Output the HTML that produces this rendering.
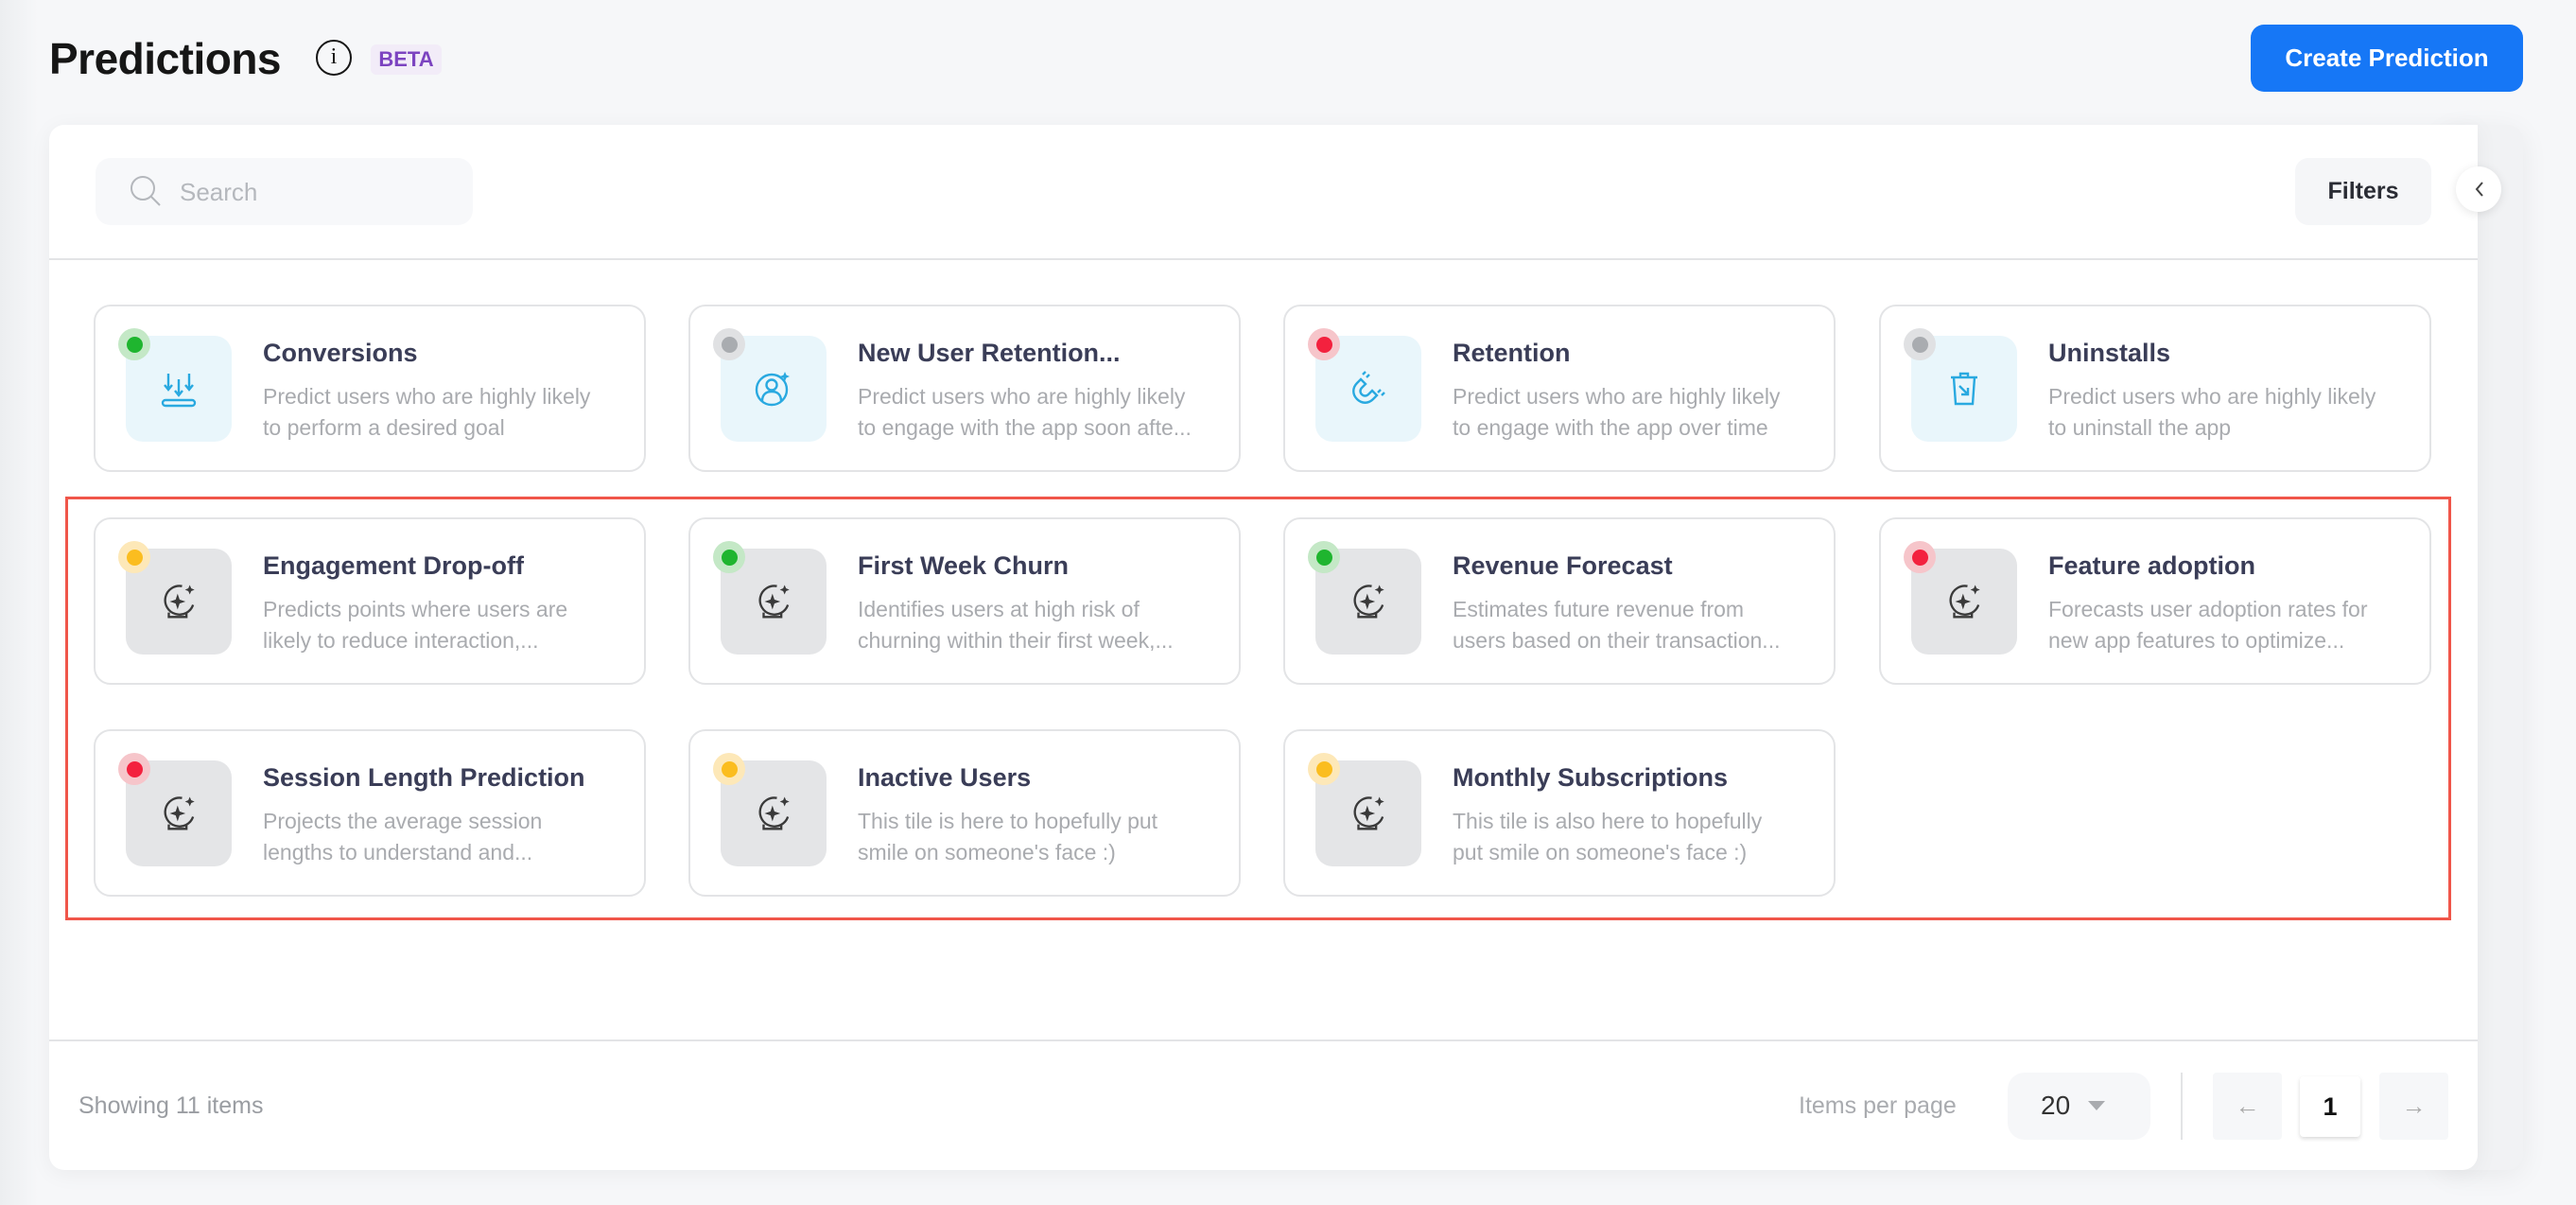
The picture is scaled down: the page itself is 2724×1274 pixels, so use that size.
<!DOCTYPE html>
<html><head><meta charset="utf-8"><style>
*{box-sizing:border-box;margin:0;padding:0}
body{width:2724px;height:1274px;background:#f6f7f9;font-family:"Liberation Sans",sans-serif;position:relative;overflow:hidden}
.a{position:absolute}
.card{position:absolute;width:584px;height:177px;border:2px solid #e3e4e6;border-radius:18px;background:#fff}
.ib{position:absolute;left:32px;top:31px;width:112px;height:112px;border-radius:18px;background:#e4e5e7;display:flex;align-items:center;justify-content:center}
.ib.b{background:#e9f6fb}
.dot{position:absolute;left:24px;top:23px;width:34px;height:34px;border-radius:50%;display:flex;align-items:center;justify-content:center}
.dot i{width:17px;height:17px;border-radius:50%;display:block}
.g{background:#c4e8c6}.g i{background:#1fb52f}
.r{background:#f6c5ca}.r i{background:#f3213e}
.y{background:#fde8b8}.y i{background:#fbbd1f}
.n{background:#e0e1e3}.n i{background:#a9acb0}
.t{position:absolute;left:177px;top:34px;font-size:27px;font-weight:bold;color:#3a3d57;white-space:nowrap}
.d{position:absolute;left:177px;top:79px;font-size:23px;line-height:33px;color:#a9abaf;width:362px}
</style></head><body>
<div class="a" style="left:0;top:0;width:40px;height:1274px;background:linear-gradient(90deg,#eceef0,#f6f7f9)"></div>
<div class="a" style="left:52px;top:35px;font-size:46px;font-weight:bold;color:#161616;letter-spacing:-0.5px">Predictions</div>
<div class="a" style="left:334px;top:42px;width:38px;height:38px;border:2.5px solid #161616;border-radius:50%;text-align:center;font-size:24px;line-height:33px;color:#161616;font-family:'Liberation Serif',serif">i</div>
<div class="a" style="left:392px;top:47px;width:75px;height:32px;background:#f2ecf8;border-radius:6px;color:#7c44c0;font-weight:bold;font-size:22px;line-height:32px;text-align:center">BETA</div>
<div class="a" style="left:2380px;top:26px;width:288px;height:71px;background:#1677f6;border-radius:14px;color:#fff;font-weight:bold;font-size:26px;line-height:71px;text-align:center">Create Prediction</div>

<div class="a" style="left:2580px;top:132px;width:88px;height:1105px;background:#f1f2f4;border-radius:16px;box-shadow:0 6px 30px rgba(0,0,0,.06)"></div>
<div class="a" style="left:52px;top:132px;width:2568px;height:1105px;background:#fff;border-radius:16px 0 16px 16px;box-shadow:0 4px 24px rgba(0,0,0,.05)"></div>

<div class="a" style="left:101px;top:167px;width:399px;height:71px;background:#f7f8fa;border-radius:16px"></div>
<svg class="a" style="left:136px;top:184px" width="36" height="36" viewBox="0 0 36 36"><circle cx="15" cy="15" r="12" fill="none" stroke="#b4b7bc" stroke-width="2"/><path d="M24 24l9 9" stroke="#b4b7bc" stroke-width="2"/></svg>
<div class="a" style="left:190px;top:188px;font-size:26px;color:#b5b8bd">Search</div>
<div class="a" style="left:2427px;top:167px;width:144px;height:71px;background:#f5f6f8;border-radius:14px;font-weight:bold;font-size:25px;color:#2a2c34;line-height:71px;text-align:center">Filters</div>
<div class="a" style="left:2597px;top:176px;width:48px;height:48px;border-radius:50%;background:#fff;box-shadow:0 2px 10px rgba(0,0,0,.1)"></div>
<svg class="a" style="left:2612px;top:190px" width="20" height="20" viewBox="0 0 20 20"><path d="M13 3l-6 7 6 7" fill="none" stroke="#444" stroke-width="2"/></svg>
<div class="a" style="left:52px;top:273px;width:2568px;height:2px;background:#e3e4e6"></div>

<div class="a" style="left:69px;top:525px;width:2523px;height:448px;border:3px solid #f0564a"></div>

<div class="card" style="left:99px;top:322px"><div class="ib b"><svg width="44" height="44" viewBox="0 0 44 44" fill="none" stroke="#29a9e0" stroke-width="2.4"><path d="M11 6v16M7 18l4 5 4-5M22 12v16M18 24l4 5 4-5M33 6v16M29 18l4 5 4-5"/><rect x="5" y="34" width="34" height="6" rx="3"/></svg></div><div class="dot g"><i></i></div><div class="t">Conversions</div><div class="d">Predict users who are highly likely to perform a desired goal</div></div>
<div class="card" style="left:728px;top:322px"><div class="ib b"><svg width="44" height="44" viewBox="0 0 44 44" fill="none" stroke="#29a9e0" stroke-width="2.4"><circle cx="20" cy="23" r="16"/><circle cx="20" cy="18" r="5.5"/><path d="M10 35c0-7 4-10 10-10s10 3 10 10"/><path d="M34 4l1.5 3.5L39 9l-3.5 1.5L34 14l-1.5-3.5L29 9l3.5-1.5z" fill="#29a9e0" stroke="none"/></svg></div><div class="dot n"><i></i></div><div class="t">New User Retention...</div><div class="d">Predict users who are highly likely to engage with the app soon afte...</div></div>
<div class="card" style="left:1357px;top:322px"><div class="ib b"><svg width="44" height="44" viewBox="0 0 44 44" fill="none" stroke="#29a9e0" stroke-width="2.4"><path d="M14 12l-4 4c-5 5-5 12 0 17s12 5 17 0l4-4-5-5-4 4c-2 2-5 2-7 0s-2-5 0-7l4-4z"/><path d="M16 7l3-3M20 10l3-3M32 26l3-3M36 29l3-3"/></svg></div><div class="dot r"><i></i></div><div class="t">Retention</div><div class="d">Predict users who are highly likely to engage with the app over time</div></div>
<div class="card" style="left:1987px;top:322px"><div class="ib b"><svg width="44" height="44" viewBox="0 0 44 44" fill="none" stroke="#29a9e0" stroke-width="2.4"><path d="M8 10h28M18 10V6h8v4M11 10l2 28h18l2-28"/><path d="M17 19l9 9M26 21v7h-7"/></svg></div><div class="dot n"><i></i></div><div class="t">Uninstalls</div><div class="d">Predict users who are highly likely to uninstall the app</div></div>

<div class="card" style="left:99px;top:547px"><div class="ib"><svg width="42" height="42" viewBox="0 0 36 36" fill="none" stroke="#3a3a3a" stroke-width="2"><path d="M21 4a13 13 0 1 0 10 17"/><path d="M9 28v4h16v-4"/><path d="M17 14l1 3 3 1-3 1-1 3-1-3-3-1 3-1z" fill="#3a3a3a"/><path d="M28 3l1.3 3 3 1.3-3 1.3-1.3 3-1.3-3-3-1.3 3-1.3z" fill="#3a3a3a" stroke="none"/></svg></div><div class="dot y"><i></i></div><div class="t">Engagement Drop-off</div><div class="d">Predicts points where users are likely to reduce interaction,...</div></div>
<div class="card" style="left:728px;top:547px"><div class="ib"><svg width="42" height="42" viewBox="0 0 36 36" fill="none" stroke="#3a3a3a" stroke-width="2"><path d="M21 4a13 13 0 1 0 10 17"/><path d="M9 28v4h16v-4"/><path d="M17 14l1 3 3 1-3 1-1 3-1-3-3-1 3-1z" fill="#3a3a3a"/><path d="M28 3l1.3 3 3 1.3-3 1.3-1.3 3-1.3-3-3-1.3 3-1.3z" fill="#3a3a3a" stroke="none"/></svg></div><div class="dot g"><i></i></div><div class="t">First Week Churn</div><div class="d">Identifies users at high risk of churning within their first week,...</div></div>
<div class="card" style="left:1357px;top:547px"><div class="ib"><svg width="42" height="42" viewBox="0 0 36 36" fill="none" stroke="#3a3a3a" stroke-width="2"><path d="M21 4a13 13 0 1 0 10 17"/><path d="M9 28v4h16v-4"/><path d="M17 14l1 3 3 1-3 1-1 3-1-3-3-1 3-1z" fill="#3a3a3a"/><path d="M28 3l1.3 3 3 1.3-3 1.3-1.3 3-1.3-3-3-1.3 3-1.3z" fill="#3a3a3a" stroke="none"/></svg></div><div class="dot g"><i></i></div><div class="t">Revenue Forecast</div><div class="d">Estimates future revenue from users based on their transaction...</div></div>
<div class="card" style="left:1987px;top:547px"><div class="ib"><svg width="42" height="42" viewBox="0 0 36 36" fill="none" stroke="#3a3a3a" stroke-width="2"><path d="M21 4a13 13 0 1 0 10 17"/><path d="M9 28v4h16v-4"/><path d="M17 14l1 3 3 1-3 1-1 3-1-3-3-1 3-1z" fill="#3a3a3a"/><path d="M28 3l1.3 3 3 1.3-3 1.3-1.3 3-1.3-3-3-1.3 3-1.3z" fill="#3a3a3a" stroke="none"/></svg></div><div class="dot r"><i></i></div><div class="t">Feature adoption</div><div class="d">Forecasts user adoption rates for new app features to optimize...</div></div>

<div class="card" style="left:99px;top:771px"><div class="ib"><svg width="42" height="42" viewBox="0 0 36 36" fill="none" stroke="#3a3a3a" stroke-width="2"><path d="M21 4a13 13 0 1 0 10 17"/><path d="M9 28v4h16v-4"/><path d="M17 14l1 3 3 1-3 1-1 3-1-3-3-1 3-1z" fill="#3a3a3a"/><path d="M28 3l1.3 3 3 1.3-3 1.3-1.3 3-1.3-3-3-1.3 3-1.3z" fill="#3a3a3a" stroke="none"/></svg></div><div class="dot r"><i></i></div><div class="t">Session Length Prediction</div><div class="d">Projects the average session lengths to understand and...</div></div>
<div class="card" style="left:728px;top:771px"><div class="ib"><svg width="42" height="42" viewBox="0 0 36 36" fill="none" stroke="#3a3a3a" stroke-width="2"><path d="M21 4a13 13 0 1 0 10 17"/><path d="M9 28v4h16v-4"/><path d="M17 14l1 3 3 1-3 1-1 3-1-3-3-1 3-1z" fill="#3a3a3a"/><path d="M28 3l1.3 3 3 1.3-3 1.3-1.3 3-1.3-3-3-1.3 3-1.3z" fill="#3a3a3a" stroke="none"/></svg></div><div class="dot y"><i></i></div><div class="t">Inactive Users</div><div class="d">This tile is here to hopefully put smile on someone's face :)</div></div>
<div class="card" style="left:1357px;top:771px"><div class="ib"><svg width="42" height="42" viewBox="0 0 36 36" fill="none" stroke="#3a3a3a" stroke-width="2"><path d="M21 4a13 13 0 1 0 10 17"/><path d="M9 28v4h16v-4"/><path d="M17 14l1 3 3 1-3 1-1 3-1-3-3-1 3-1z" fill="#3a3a3a"/><path d="M28 3l1.3 3 3 1.3-3 1.3-1.3 3-1.3-3-3-1.3 3-1.3z" fill="#3a3a3a" stroke="none"/></svg></div><div class="dot y"><i></i></div><div class="t">Monthly Subscriptions</div><div class="d">This tile is also here to hopefully put smile on someone's face :)</div></div>

<div class="a" style="left:52px;top:1099px;width:2568px;height:2px;background:#e3e4e6"></div>
<div class="a" style="left:83px;top:1155px;font-size:25px;color:#9a9da2">Showing 11 items</div>
<div class="a" style="left:1902px;top:1155px;font-size:25px;color:#a9abaf">Items per page</div>
<div class="a" style="left:2123px;top:1134px;width:151px;height:71px;background:#f6f7f9;border-radius:18px"></div>
<div class="a" style="left:2158px;top:1153px;font-size:28px;color:#333">20</div>
<svg class="a" style="left:2208px;top:1164px" width="18" height="10"><path d="M0 0h18L9 10z" fill="#a9abaf"/></svg>
<div class="a" style="left:2306px;top:1134px;width:2px;height:71px;background:#e3e4e6"></div>
<div class="a" style="left:2340px;top:1134px;width:73px;height:71px;background:#f6f7f9;border-radius:4px;text-align:center;line-height:71px;font-size:26px;color:#aaa">←</div>
<div class="a" style="left:2432px;top:1138px;width:64px;height:64px;background:#fff;border-radius:4px;box-shadow:0 2px 4px rgba(0,0,0,.15);text-align:center;line-height:64px;font-size:27px;font-weight:bold;color:#111">1</div>
<div class="a" style="left:2516px;top:1134px;width:73px;height:71px;background:#f6f7f9;border-radius:4px;text-align:center;line-height:71px;font-size:26px;color:#aaa">→</div>
</body></html>
